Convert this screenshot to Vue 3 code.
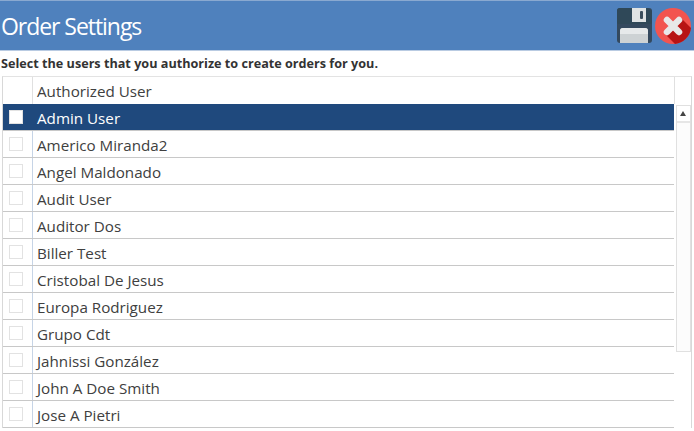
<script setup>
const users = ['Admin User','Americo Miranda2','Angel Maldonado','Audit User','Auditor Dos','Biller Test','Cristobal De Jesus','Europa Rodriguez','Grupo Cdt','Jahnissi González','John A Doe Smith','Jose A Pietri']
</script>

<template>
  <div class="page">
    <header class="bar">
      <h1>Order Settings</h1>
      <div class="actions">
        <svg class="save" width="35" height="35" viewBox="0 0 35 35">
          <rect x="0" y="0" width="35" height="35" rx="3" fill="#34495e"/>
          <path d="M0 14 V3 a3 3 0 0 1 3-3 H30 L35 3 V14 a2 2 0 0 1 -2 2 H2 a2 2 0 0 1 -2-2z" fill="#2f4858"/>
          <rect x="15" y="0" width="14" height="14" fill="#dfe3e4"/>
          <rect x="23" y="3" width="3" height="8" rx="1" fill="#3a4d5c"/>
          <path d="M3 35 V23 a3 3 0 0 1 3-3 H28 a3 3 0 0 1 3 3 V35z" fill="#cdd2d4"/>
          <path d="M3 26 V23 a3 3 0 0 1 3-3 H28 a3 3 0 0 1 3 3 V26z" fill="#e6e9ea"/>
        </svg>
        <svg class="close" width="36" height="36" viewBox="0 0 36 36">
          <circle cx="18" cy="18" r="18" fill="#f2544f"/>
          <path d="M10 26 L20 36 A18 18 0 0 0 36 20 L26 10z" fill="#b71414"/>
          <path d="M12 12 L24 24 M24 12 L12 24" stroke="#e8e8e8" stroke-width="6.5" stroke-linecap="round" fill="none"/>
        </svg>
      </div>
    </header>
    <p class="hint">Select the users that you authorize to create orders for you.</p>
    <div class="grid">
      <div class="head">
        <div class="cell-check"></div>
        <div class="cell-name">Authorized User</div>
      </div>
      <div class="body">
        <div class="rows">
          <div v-for="(u, i) in users" :key="u" class="row" :class="{ selected: i === 0 }">
            <div class="cell-check"><span class="box"></span></div>
            <div class="cell-name">{{ u }}</div>
          </div>
        </div>
        <div class="scroll">
          <div class="up"></div>
        </div>
      </div>
    </div>
  </div>
</template>

<style scoped>
.page {
  width: 694px;
  height: 431px;
  overflow: hidden;
  background: #fff;
  font-family: "Open Sans", "Noto Sans", sans-serif;
}
.bar {
  height: 51px;
  box-sizing: border-box;
  background: #4f81bd;
  border-top: 1px solid #8aa9d0;
  border-bottom: 1px solid #b9cbe2;
  display: flex;
  align-items: flex-start;
  justify-content: space-between;
}
h1 {
  margin: 8px 0 0 1px;
  font-size: 23px;
  line-height: 34px;
  font-weight: 400;
  letter-spacing: -1.05px;
  color: #fff;
}
.actions {
  display: flex;
  align-items: flex-start;
  gap: 3px;
  margin: 7px 3px 0 0;
}
.hint {
  margin: 0;
  padding-left: 1px;
  height: 25px;
  line-height: 25px;
  font-size: 12.65px;
  font-weight: 700;
  color: #333;
}
.grid {
  margin: 0 2px;
  border-top: 1px solid #e3e3e3;
  border-left: 1px solid #d8d8d8;
  border-right: 1px solid #d8d8d8;
}
.head {
  display: flex;
  height: 27px;
  box-sizing: border-box;
}
.head .cell-check { border-right: 1px solid #e0e0e0; }
.head .cell-name { border-right: 1px solid #e0e0e0; width: 642px; flex: none; box-sizing: border-box; line-height: 29px; }
.cell-check {
  width: 30px;
  flex: none;
  box-sizing: border-box;
  display: flex;
  align-items: center;
  justify-content: center;
  border-right: 1px solid #c6d4e6;
}
.cell-name {
  flex: 1;
  padding-left: 4px;
  font-size: 15.2px;
  color: #404040;
}
.body { display: flex; }
.rows { width: 671px; flex: none; }
.row {
  display: flex;
  height: 27px;
  box-sizing: border-box;
  border-bottom: 1px solid #c8c8c8;
}
.row .cell-name { line-height: 28px; }
.box {
  width: 14px;
  height: 14px;
  box-sizing: border-box;
  background: #fff;
  border: 1px solid #e2e2e2;
  margin-right: 3px;
  margin-top: -1px;
}
.selected { background: #1f497d; }
.selected .cell-check { border-right-color: #1f497d; }
.selected .cell-name { color: #fff; }
.scroll {
  width: 15px;
  margin-left: 2px;
  margin-top: 1px;
  height: 247px;
  box-sizing: border-box;
  border: 1px solid #e0e0e0;
  background: #fcfcfc;
}
.up {
  height: 15px;
  background: #fff;
  border-bottom: 2px solid #e6e6e6;
  position: relative;
}
.up::after {
  content: "";
  position: absolute;
  left: 3px;
  top: 5px;
  border-left: 3.5px solid transparent;
  border-right: 3.5px solid transparent;
  border-bottom: 5px solid #444;
}
</style>
